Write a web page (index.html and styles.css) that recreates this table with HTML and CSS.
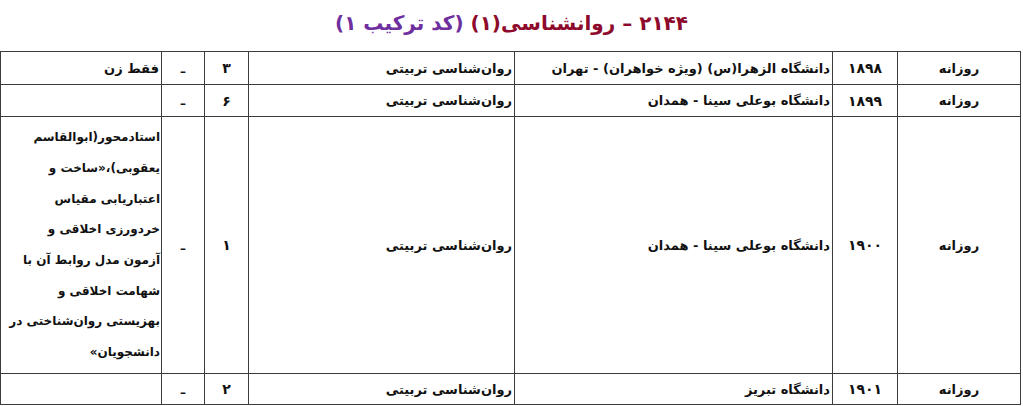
FILE: index.html
```html
<!DOCTYPE html>
<html lang="fa" dir="rtl">
<head>
<meta charset="utf-8">
<link rel="stylesheet" href="styles.css">
</head>
<body>
<h1 class="title"><span class="red">۲۱۴۴ – روانشناسی(۱)</span> <span class="purple">(کد ترکیب ۱)</span></h1>
<table class="grid">
  <colgroup>
    <col class="c-type"><col class="c-code"><col class="c-uni"><col class="c-field"><col class="c-cap"><col class="c-dash"><col class="c-note">
  </colgroup>
  <tr class="r1">
    <td class="center">روزانه</td>
    <td class="center num">۱۸۹۸</td>
    <td class="right">دانشگاه الزهرا(س) (ویژه خواهران) - تهران</td>
    <td class="right">روان‌شناسی تربیتی</td>
    <td class="center num">۳</td>
    <td class="center">ـ</td>
    <td class="right">فقط زن</td>
  </tr>
  <tr class="r2">
    <td class="center">روزانه</td>
    <td class="center num">۱۸۹۹</td>
    <td class="right">دانشگاه بوعلی سینا - همدان</td>
    <td class="right">روان‌شناسی تربیتی</td>
    <td class="center num">۶</td>
    <td class="center">ـ</td>
    <td class="right"></td>
  </tr>
  <tr class="r3">
    <td class="center">روزانه</td>
    <td class="center num">۱۹۰۰</td>
    <td class="right">دانشگاه بوعلی سینا - همدان</td>
    <td class="right">روان‌شناسی تربیتی</td>
    <td class="center num">۱</td>
    <td class="center">ـ</td>
    <td class="right note">استادمحور(ابوالقاسم<br>یعقوبی)،«ساخت و<br>اعتباریابی مقیاس<br>خردورزی اخلاقی و<br>آزمون مدل روابط آن با<br>شهامت اخلاقی و<br>بهزیستی روان‌شناختی در<br>دانشجویان»</td>
  </tr>
  <tr class="r4">
    <td class="center">روزانه</td>
    <td class="center num">۱۹۰۱</td>
    <td class="right">دانشگاه تبریز</td>
    <td class="right">روان‌شناسی تربیتی</td>
    <td class="center num">۲</td>
    <td class="center">ـ</td>
    <td class="right"></td>
  </tr>
</table>
</body>
</html>
```
FILE: styles.css
```css
html, body {
  margin: 0;
  padding: 0;
  background: #ffffff;
}
body {
  font-family: "DejaVu Sans", sans-serif;
  color: #111;
}
.title {
  margin: 0;
  height: 51px;
  line-height: 46px;
  text-align: center;
  font-size: 20px;
  font-weight: bold;
}
.red { color: #8e0a2c; }
.purple { color: #6f2f9f; }
.grid {
  border-collapse: collapse;
  margin-right: 2px;
  width: 1020px;
  table-layout: fixed;
  font-size: 13px;
  font-weight: bold;
}
.grid td {
  border: 1px solid #3c3c3c;
  padding: 0 2px;
  vertical-align: middle;
}
.c-type { width: 123px; }
.c-code { width: 65px; }
.c-uni { width: 318px; }
.c-field { width: 266px; }
.c-cap { width: 44px; }
.c-dash { width: 43px; }
.c-note { width: 161px; }
.r1 td { height: 32px; }
.r2 td { height: 31px; }
.r3 td { height: 256px; }
.r4 td { height: 30px; }
.center { text-align: center; }
.right { text-align: right; }
.num { font-size: 14px; }
.grid td.note {
  line-height: 30.7px;
  white-space: nowrap;
  padding: 0 1px;
  font-size: 12px;
}
```
